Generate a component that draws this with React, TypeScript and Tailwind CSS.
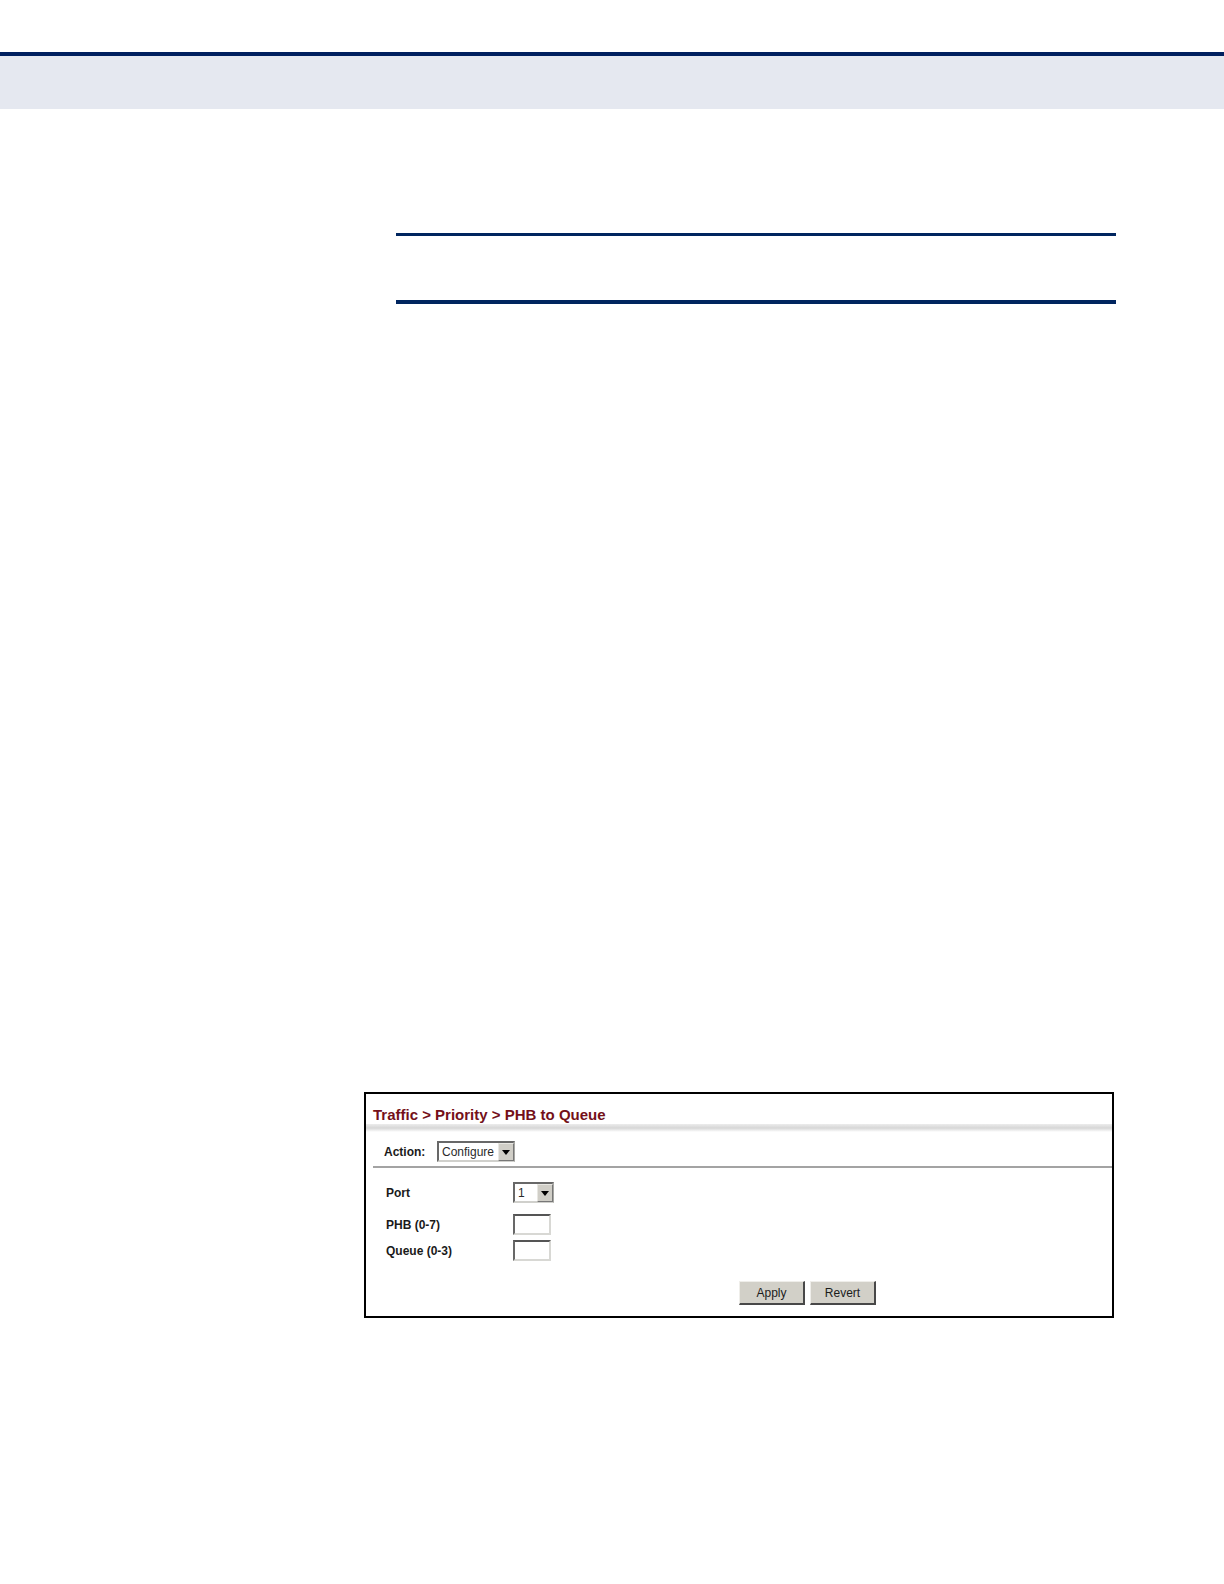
import React from "react";

type SelectBoxProps = {
  id: string;
  options: string[];
  className: string;
};

const SelectBox = ({ id, options, className }: SelectBoxProps) => {
  return (
    <div className={`relative ${className}`}>
      <select
        id={id}
        className="block h-full w-full appearance-none border-2 border-t-[#686868] border-l-[#686868] border-r-[#a8a8a4] border-b-[#d0d0cc] bg-white pl-[3px] text-[12px] leading-4 text-[#2a2a2a]"
      >
        {options.map((option) => (
          <option key={option}>{option}</option>
        ))}
      </select>
      <span className="pointer-events-none absolute top-[2px] right-px bottom-px flex w-4 items-center justify-center border border-t-[#e8e7e2] border-l-[#e8e7e2] border-r-[#777777] border-b-[#777777] bg-[#d0cec7]">
        <svg width="8" height="5" viewBox="0 0 8 5" aria-hidden="true">
          <path d="M0 0h8L4 5z" fill="#000000" />
        </svg>
      </span>
    </div>
  );
};

const NumberField = ({ id }: { id: string }) => {
  return (
    <input
      id={id}
      type="text"
      className="block h-[21px] w-[38px] border-2 border-t-[#555555] border-l-[#686868] border-r-[#d8d8d4] border-b-[#d8d8d4] bg-white px-1 text-[12px]"
    />
  );
};

const PanelButton = ({ label }: { label: string }) => {
  return (
    <button
      type="button"
      className="h-6 w-[66px] border border-t-[#efeeea] border-l-[#efeeea] border-r-2 border-b-2 border-r-[#484848] border-b-[#484848] bg-[#d2d0c8] text-[12px] leading-4 text-[#1c1c1c]"
    >
      {label}
    </button>
  );
};

const PriorityPanel = () => {
  return (
    <form className="border-2 border-black bg-white pb-[11px] text-[#1a1a1a]">
      <h1 className="pt-3 pl-[7px] text-[15px] leading-[18px] font-bold text-[#741019]">
        Traffic &gt; Priority &gt; PHB to Queue
      </h1>
      <div className="h-2 bg-linear-to-b from-[#ececec] via-[#d6d6d6] to-white" />

      <div className="ml-[7px] flex h-9 items-center border-b-2 border-[#a3a3a3] pt-[5px] pl-[11px]">
        <label htmlFor="action" className="w-[53px] text-[12px] font-bold">
          Action:
        </label>
        <SelectBox
          id="action"
          options={["Configure", "Show"]}
          className="h-[21px] w-[78px]"
        />
      </div>

      <div className="pt-[14px] pl-5 text-[12px] leading-4 font-bold">
        <div className="flex items-center">
          <label htmlFor="port" className="w-[127px]">
            Port
          </label>
          <SelectBox
            id="port"
            options={["1", "2", "3", "4"]}
            className="h-[21px] w-[41px] font-normal"
          />
        </div>
        <div className="mt-[11px] flex items-center">
          <label htmlFor="phb" className="w-[127px]">
            PHB (0-7)
          </label>
          <NumberField id="phb" />
        </div>
        <div className="mt-[5px] flex items-center">
          <label htmlFor="queue" className="w-[127px]">
            Queue (0-3)
          </label>
          <NumberField id="queue" />
        </div>
      </div>

      <div className="mt-5 ml-[50%] flex gap-[5px]">
        <PanelButton label="Apply" />
        <PanelButton label="Revert" />
      </div>
    </form>
  );
};

export default function App() {
  return (
    <div className="min-h-screen bg-white pt-[52px] font-['Liberation_Sans',Arial,sans-serif]">
      <header className="h-[57px] border-t-4 border-[#00205f] bg-[#e5e8f0]" />
      <main className="pt-[124px] pr-[110px] pb-24 pl-[364px]">
        <div className="-mr-[2px] ml-8 h-[71px] border-t-[3px] border-b-4 border-[#00255f]" />
        <div className="mt-[788px]">
          <PriorityPanel />
        </div>
      </main>
    </div>
  );
}
